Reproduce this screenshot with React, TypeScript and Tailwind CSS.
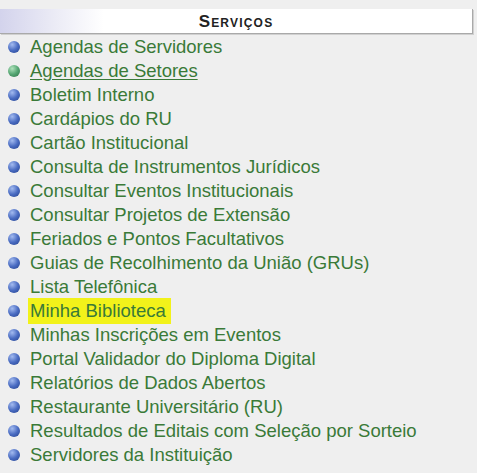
import React from 'react';

const ITEMS = [
  'Agendas de Servidores',
  'Agendas de Setores',
  'Boletim Interno',
  'Cardápios do RU',
  'Cartão Institucional',
  'Consulta de Instrumentos Jurídicos',
  'Consultar Eventos Institucionais',
  'Consultar Projetos de Extensão',
  'Feriados e Pontos Facultativos',
  'Guias de Recolhimento da União (GRUs)',
  'Lista Telefônica',
  'Minha Biblioteca',
  'Minhas Inscrições em Eventos',
  'Portal Validador do Diploma Digital',
  'Relatórios de Dados Abertos',
  'Restaurante Universitário (RU)',
  'Resultados de Editais com Seleção por Sorteio',
  'Servidores da Instituição',
];

function Bullet({ visited }: { visited?: boolean }) {
  return (
    <span
      className={`w-[12px] h-[12px] rounded-full flex-shrink-0 ${
        visited
          ? 'bg-[radial-gradient(circle_at_35%_30%,#b0e2bc_0%,#55a673_50%,#2d7247_100%)]'
          : 'bg-[radial-gradient(circle_at_35%_30%,#a3bbf0_0%,#4a6cc2_50%,#22408c_100%)]'
      }`}
    />
  );
}

export default function App() {
  return (
    <div className="w-[477px] h-[473px] bg-[#efefef] pt-[9px] overflow-hidden font-['Liberation_Sans',Arial,sans-serif]">
      {/* header */}
      <div className="w-[473px] h-[25px] flex items-center justify-center bg-[linear-gradient(to_right,#d3d3ec_0%,#ececf6_12%,#ffffff_22%)] border-b border-r border-[#a9a9a9] shadow-[1px_1px_0_#d0d0d0]">
        <span className="text-[17px] font-bold tracking-[1.2px] text-[#222] [font-variant:small-caps] leading-none">
          Serviços
        </span>
      </div>

      <ul className="pt-px">
        {ITEMS.map((item, i) => (
          <li key={item} className="h-[24px] flex items-center pl-[8px] gap-[10px]">
            <Bullet visited={i === 1} />
            <span
              className={`text-[18.5px] leading-[24px] text-[#3a7a38] ${i === 1 ? 'underline underline-offset-2' : ''} ${
                i === 11 ? 'bg-[#f2f21a] -ml-[2px] pl-[2px] pr-[5px] py-px' : ''
              }`}
            >
              {item}
            </span>
          </li>
        ))}
      </ul>
    </div>
  );
}
